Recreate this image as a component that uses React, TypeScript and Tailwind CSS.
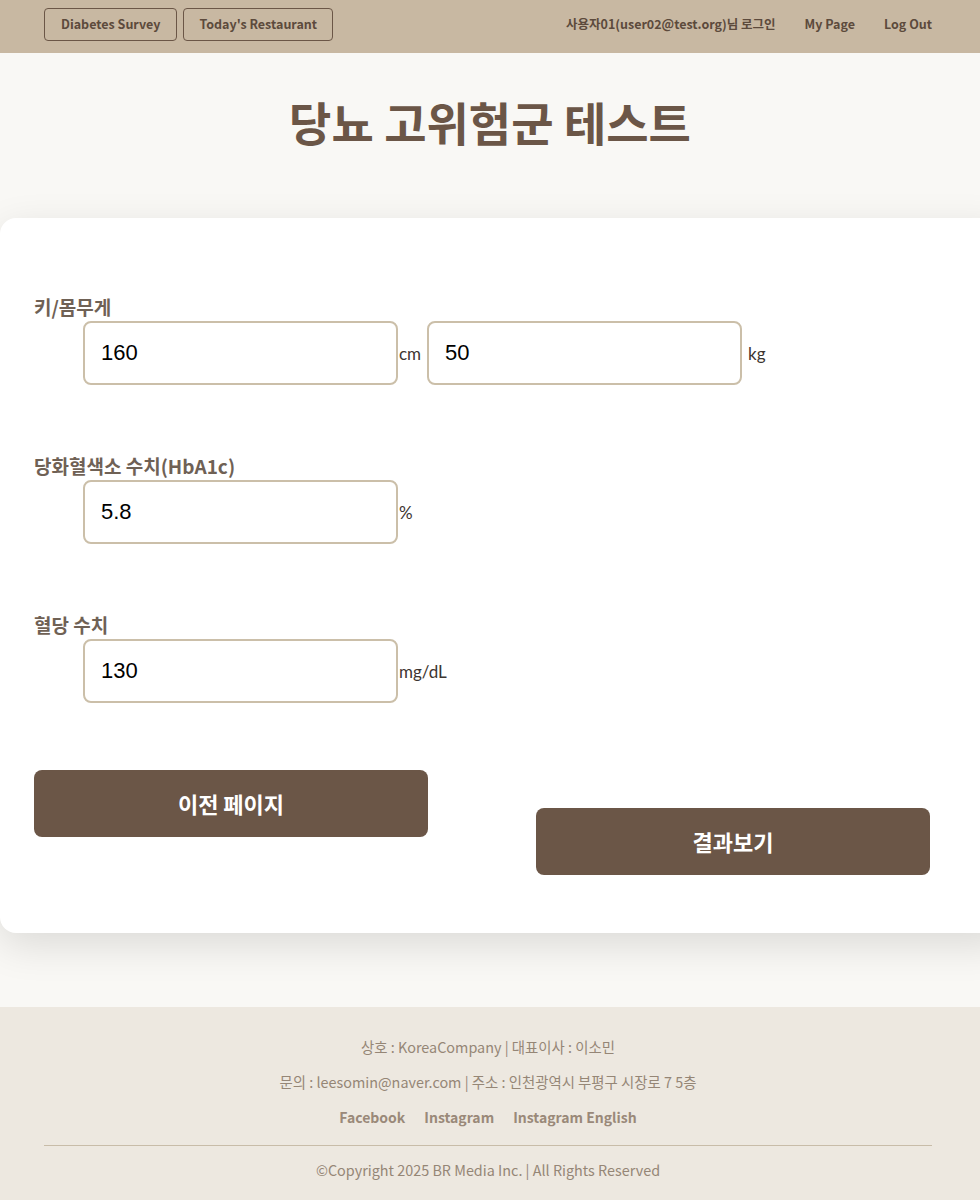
import React from "react";

const kr = { fontFamily: '"Noto Sans CJK KR", "Noto Sans", sans-serif' };

function Field({ value, unit, gap = "ml-[1px]" }: { value: string; unit: string; gap?: string }) {
  return (
    <div className="flex items-center">
      <input
        defaultValue={value}
        className="w-[315px] h-[64px] border-2 border-[#cbbfa9] rounded-lg px-4 text-[22px] text-black outline-none bg-white"
        style={{ fontFamily: '"Liberation Sans", Arial, sans-serif' }}
      />
      <span className={`${gap} text-[17px] text-[#3d3530] pt-[2px]`} style={{ fontFamily: 'Lato, "Noto Sans CJK KR", sans-serif' }}>
        {unit}
      </span>
    </div>
  );
}

export default function App() {
  return (
    <div className="min-h-[1200px] bg-[#f9f8f5] overflow-hidden flex flex-col" style={kr}>
      {/* Header */}
      <header className="h-[53px] bg-[#c8b8a2] flex items-center justify-between pl-[44px] pr-[48px] pb-[5px]">
        <div className="flex gap-[6px]">
          <button className="h-[33px] px-[16px] border border-[#6b5647] rounded-[4px] text-[12.5px] font-bold text-[#5c4a3c]">
            Diabetes Survey
          </button>
          <button className="h-[33px] px-[15px] border border-[#6b5647] rounded-[4px] text-[12.5px] font-bold text-[#5c4a3c]">
            Today's Restaurant
          </button>
        </div>
        <nav className="flex items-center gap-[29px] text-[12.5px] font-bold text-[#5c4a3c]">
          <span>사용자01(user02@test.org)님 로그인</span>
          <span>My Page</span>
          <span>Log Out</span>
        </nav>
      </header>

      {/* Title */}
      <h1 className="text-center text-[46px] font-bold text-[#6b5647] mt-[36px] leading-[64px]">
        당뇨 고위험군 테스트
      </h1>

      {/* Card */}
      <div className="mt-[65px] w-[1010px] bg-white rounded-2xl shadow-[0_12px_40px_rgba(0,0,0,0.12)] pt-[76px] pb-[58px] px-[34px]">
        <div className="flex flex-col gap-[68px]">
          <div>
            <div className="text-[19px] font-bold text-[#6f6155] leading-[26px]">키/몸무게</div>
            <div className="ml-[49px] mt-[1px] flex items-center gap-[6px]">
              <Field value="160" unit="cm" />
              <Field value="50" unit="kg" gap="ml-[6px]" />
            </div>
          </div>
          <div>
            <div className="text-[19px] font-bold text-[#6f6155] leading-[26px]">당화혈색소 수치(HbA1c)</div>
            <div className="ml-[49px] mt-[1px]">
              <Field value="5.8" unit="%" />
            </div>
          </div>
          <div>
            <div className="text-[19px] font-bold text-[#6f6155] leading-[26px]">혈당 수치</div>
            <div className="ml-[49px] mt-[1px]">
              <Field value="130" unit="mg/dL" />
            </div>
          </div>
        </div>

        <div className="mt-[67px] flex items-start gap-[108px]">
          <button className="w-[394px] h-[67px] rounded-lg bg-[#6b5647] text-white text-[22px] font-bold">
            이전 페이지
          </button>
          <button className="mt-[38px] w-[394px] h-[67px] rounded-lg bg-[#6b5647] text-white text-[22px] font-bold">
            결과보기
          </button>
        </div>
      </div>

      {/* Footer */}
      <footer className="mt-[74px] flex-1 bg-[#ede8e0] pl-[44px] pr-[48px] pt-[30px] pb-[20px] text-center text-[#958676]">
        <p className="text-[14.4px] leading-[20px]">상호 : KoreaCompany | 대표이사 : 이소민</p>
        <p className="text-[14.4px] leading-[20px] mt-[15px]">
          문의 : leesomin@naver.com | 주소 : 인천광역시 부평구 시장로 7 5층
        </p>
        <div className="mt-[14px] flex justify-center gap-[19px] text-[14px] font-semibold text-[#9a8979] leading-[22px]">
          <span>Facebook</span>
          <span>Instagram</span>
          <span>Instagram English</span>
        </div>
        <hr className="mt-[17px] border-t-[1.5px] border-[#c8bca8]" />
        <p className="mt-[14px] text-[14.4px] leading-[20px]">©Copyright 2025 BR Media Inc. | All Rights Reserved</p>
      </footer>
    </div>
  );
}
